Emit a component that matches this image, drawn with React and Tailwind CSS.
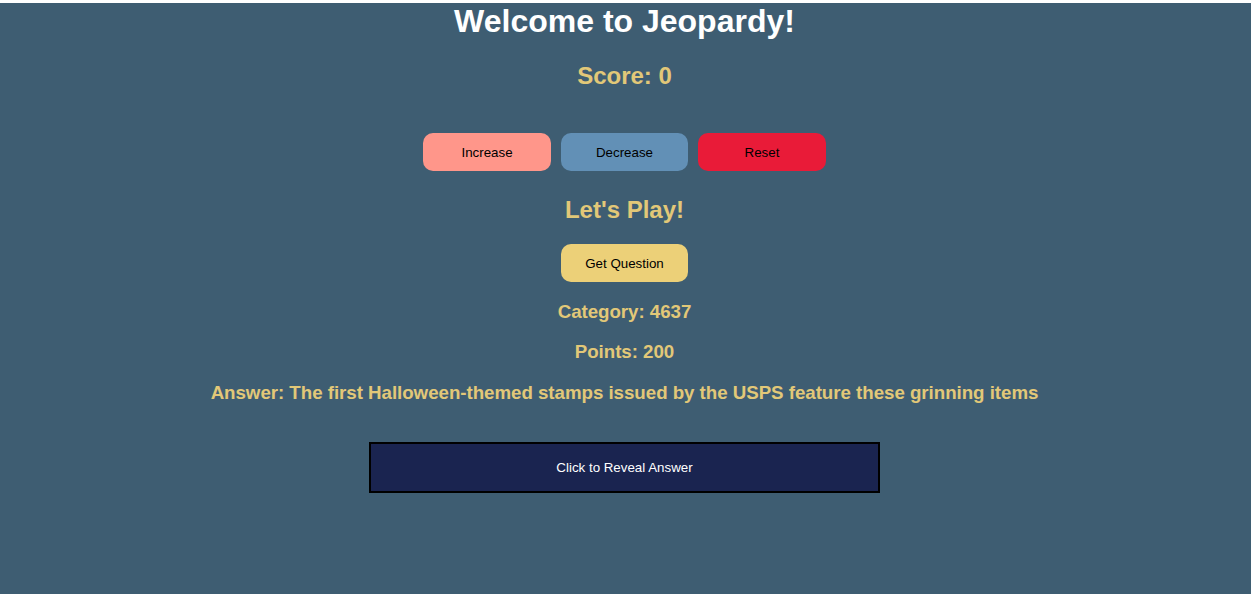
export default function App() {
  const gold = "text-[#e2c878]";
  return (
    <div className="min-h-[594px] bg-white pt-[3px] font-['Liberation_Sans',Arial,sans-serif]">
      <div className="min-h-[591px] bg-[#3e5d72] pr-[2px] flex flex-col items-center text-center">
        <h1 className="text-[32px] leading-[37px] font-bold text-white">Welcome to Jeopardy!</h1>
        <h2 className={`mt-[22px] text-[24px] leading-[28px] font-bold ${gold}`}>Score: 0</h2>

        <div className="mt-[43px] flex gap-[10px]">
          <button className="w-[128px] h-[38px] pt-[1px] rounded-[10px] bg-[#ff968a] text-[13.33px] text-black">Increase</button>
          <button className="w-[127px] h-[38px] pt-[1px] rounded-[10px] bg-[#6290b6] text-[13.33px] text-black">Decrease</button>
          <button className="w-[128px] h-[38px] pt-[1px] rounded-[10px] bg-[#e91b38] text-[13.33px] text-black">Reset</button>
        </div>

        <h2 className={`mt-[25px] text-[24px] leading-[28px] font-bold ${gold}`}>Let's Play!</h2>
        <button className="mt-[20px] w-[127px] h-[38px] pt-[1px] rounded-[10px] bg-[#ecd078] text-[13.33px] text-black">Get Question</button>

        <h3 className={`mt-[19px] text-[18.72px] tracking-[-0.03px] leading-[22px] font-bold ${gold}`}>Category: 4637</h3>
        <h3 className={`mt-[18px] text-[18.72px] tracking-[-0.03px] leading-[22px] font-bold ${gold}`}>Points: 200</h3>
        <h3 className={`mt-[19px] text-[18.72px] tracking-[-0.03px] leading-[22px] font-bold ${gold}`}>
          Answer: The first Halloween-themed stamps issued by the USPS feature these grinning items
        </h3>

        <button className="mt-[38px] w-[511px] h-[51px] pt-[1px] border-2 border-black bg-[#1a2450] text-[13.33px] text-white">
          Click to Reveal Answer
        </button>
      </div>
    </div>
  );
}
